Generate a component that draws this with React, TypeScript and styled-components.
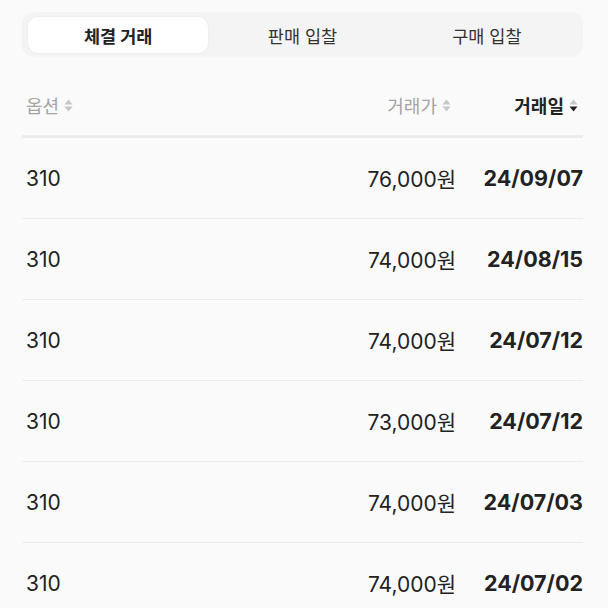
import React from "react";
import styled, { createGlobalStyle } from "styled-components";

const Global = createGlobalStyle`
  html, body { margin: 0; padding: 0; background: #fafafa; }
  body { font-family: Inter, "Noto Sans CJK KR", sans-serif; color: #222; }
`;

const Page = styled.div`
  width: 561px;
  padding: 12px 25px 0 22px;
`;

const TabBar = styled.div`
  display: grid;
  grid-template-columns: repeat(3, 1fr);
  height: 45px;
  box-sizing: border-box;
  padding: 5px 4px 4px;
  background: #f4f4f4;
  border-radius: 12px;
`;

const Tab = styled.div<{ $active?: boolean }>`
  display: flex;
  align-items: center;
  justify-content: center;
  margin: 0 2px;
  border-radius: 10px;
  font-size: 17.5px;
  font-weight: ${(p) => (p.$active ? 700 : 400)};
  color: ${(p) => (p.$active ? "#222" : "#333")};
  background: ${(p) => (p.$active ? "#fff" : "transparent")};
  box-shadow: ${(p) => (p.$active ? "0 0 3px rgba(0,0,0,0.06)" : "none")};
`;

const Grid = styled.div`
  display: grid;
  grid-template-columns: 1fr 160px 127px;
  align-items: center;
`;

const HeadRow = styled(Grid)`
  margin-top: 24px;
  height: 57px;
  box-sizing: border-box;
  padding-bottom: 6px;
  border-bottom: 3px solid #ececec;
`;

const HeadCell = styled.div<{ $align?: "left" | "right"; $active?: boolean }>`
  display: flex;
  align-items: center;
  gap: 5px;
  justify-content: ${(p) => (p.$align === "right" ? "flex-end" : "flex-start")};
  padding: ${(p) => (p.$align === "right" ? "0 5px 0 0" : "0 0 0 4px")};
  font-size: 18px;
  font-weight: ${(p) => (p.$active ? 700 : 400)};
  color: ${(p) => (p.$active ? "#222" : "#a4a4a4")};
`;

const Row = styled(Grid)`
  height: 81px;
  box-sizing: border-box;
  border-bottom: 1px solid #ebebeb;
`;

const Option = styled.div`
  padding-left: 4px;
  font-size: 21px;
  color: #222;
`;

const Price = styled.div`
  text-align: right;
  font-size: 21px;
  color: #222;
`;

const DateCell = styled.div`
  text-align: right;
  font-size: 21.5px;
  font-weight: 700;
  color: #222;
`;

const SortIcon = ({ active }: { active?: boolean }) => (
  <svg width="9" height="13" viewBox="0 0 9 13">
    <path d="M4.5 0.5 L8.5 5.5 L0.5 5.5 Z" fill="#c6c6c6" />
    <path d="M0.5 7.5 L8.5 7.5 L4.5 12.5 Z" fill={active ? "#222" : "#c6c6c6"} />
  </svg>
);

const rows = [
  { opt: "310", price: "76,000원", date: "24/09/07" },
  { opt: "310", price: "74,000원", date: "24/08/15" },
  { opt: "310", price: "74,000원", date: "24/07/12" },
  { opt: "310", price: "73,000원", date: "24/07/12" },
  { opt: "310", price: "74,000원", date: "24/07/03" },
  { opt: "310", price: "74,000원", date: "24/07/02" },
];

export default function App() {
  return (
    <>
      <Global />
      <Page>
        <TabBar>
          <Tab $active>체결 거래</Tab>
          <Tab>판매 입찰</Tab>
          <Tab>구매 입찰</Tab>
        </TabBar>
        <HeadRow>
          <HeadCell>
            옵션 <SortIcon />
          </HeadCell>
          <HeadCell $align="right">
            거래가 <SortIcon />
          </HeadCell>
          <HeadCell $align="right" $active>
            거래일 <SortIcon active />
          </HeadCell>
        </HeadRow>
        {rows.map((r, i) => (
          <Row key={i}>
            <Option>{r.opt}</Option>
            <Price>{r.price}</Price>
            <DateCell>{r.date}</DateCell>
          </Row>
        ))}
      </Page>
    </>
  );
}
